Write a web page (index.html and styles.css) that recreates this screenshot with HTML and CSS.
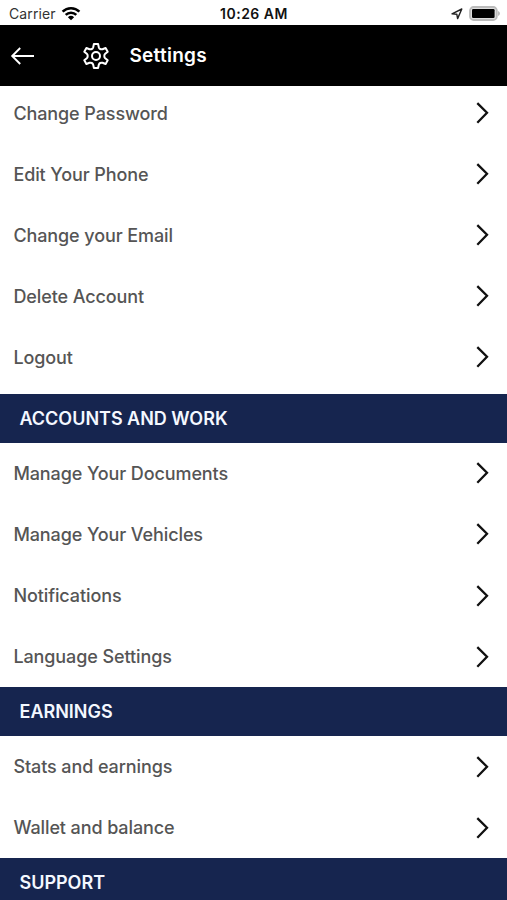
FILE: index.html
```html
<!DOCTYPE html>
<html lang="en">
<head>
<meta charset="utf-8">
<title>Settings</title>
<link rel="stylesheet" href="styles.css">
</head>
<body>
<svg class="defs" aria-hidden="true"><symbol id="chevron" viewBox="0 0 14 24"><path d="M2.3 2.1 12 11.8 2.3 21.7" fill="none" stroke="#111" stroke-width="2.3"/></symbol></svg>
<div class="status">
  <div class="carrier"><span>Carrier</span>
    <svg width="20" height="15" viewBox="0 0 20 15"><g fill="none" stroke="#000" stroke-width="2.5"><path d="M1.6 5.6a12 12 0 0 1 16.8 0"/><path d="M4.7 8.9a7.6 7.6 0 0 1 10.6 0"/></g><path d="M6.9 11.2a4.5 4.5 0 0 1 6.2 0L10 14.3z"/></svg>
  </div>
  <div class="time">10:26 AM</div>
  <div class="indicators">
    <svg width="12" height="12" viewBox="0 0 12 12"><path d="M1 5.9 10.8 1 6.6 10.6 5.8 6.2z" fill="none" stroke="#222" stroke-width="1.4" stroke-linejoin="round"/></svg>
    <svg width="31" height="15" viewBox="0 0 31 15"><rect x="1" y="1" width="26.8" height="13" rx="3.6" fill="#ddd" stroke="#bbb" stroke-width="1.8"/><rect x="3" y="3" width="22.6" height="9" rx="1.2"/><path d="M29 5q2 .8 2 2.5T29 10z" fill="#bbb"/></svg>
  </div>
</div>
<header class="bar">
  <svg class="back" width="24" height="20" viewBox="0 0 24 20"><path d="M10.2 2 2.2 10l8 8M2.2 10H24" fill="none" stroke="#fff" stroke-width="1.9"/></svg>
  <svg class="gear" width="26" height="28" viewBox="0 0 26 28"><g fill="none" stroke="#fff" stroke-width="2" stroke-linejoin="round"><path d="M10.9 2h4.2l.7 3.2q.3 1.2 1.4 1.8t2.3.2l3.1-1.2 2.1 3.7-2.5 2.1q-.9.8-.9 2.2t.9 2.2l2.5 2.1-2.1 3.7-3.1-1.2q-1.2-.4-2.3.2t-1.4 1.8l-.7 3.2h-4.2l-.7-3.2q-.3-1.2-1.4-1.8t-2.3-.2l-3.1 1.2-2.1-3.7 2.5-2.1q.9-.8.9-2.2t-.9-2.2L1.3 9.7 3.4 6l3.1 1.2q1.2.4 2.3-.2t1.4-1.8z"/><circle cx="13" cy="14" r="4"/></g></svg>
  <h1>Settings</h1>
</header>
<main>
  <ul class="first">
    <li><span>Change Password</span><svg><use href="#chevron"/></svg></li>
    <li><span>Edit Your Phone</span><svg><use href="#chevron"/></svg></li>
    <li><span>Change your Email</span><svg><use href="#chevron"/></svg></li>
    <li><span>Delete Account</span><svg><use href="#chevron"/></svg></li>
    <li><span>Logout</span><svg><use href="#chevron"/></svg></li>
  </ul>
  <h2>ACCOUNTS AND WORK</h2>
  <ul>
    <li><span>Manage Your Documents</span><svg><use href="#chevron"/></svg></li>
    <li><span>Manage Your Vehicles</span><svg><use href="#chevron"/></svg></li>
    <li><span>Notifications</span><svg><use href="#chevron"/></svg></li>
    <li><span>Language Settings</span><svg><use href="#chevron"/></svg></li>
  </ul>
  <h2>EARNINGS</h2>
  <ul>
    <li><span>Stats and earnings</span><svg><use href="#chevron"/></svg></li>
    <li><span>Wallet and balance</span><svg><use href="#chevron"/></svg></li>
  </ul>
  <h2>SUPPORT</h2>
</main>
</body>
</html>
```
FILE: styles.css
```css
* { box-sizing: border-box; }
body { margin: 0; height: 900px; overflow: hidden; display: flex; flex-direction: column; background: #fff; font-family: Inter, "Liberation Sans", sans-serif; color: #555; }
.defs { position: absolute; width: 0; height: 0; }
.status { flex: none; height: 25.4px; padding: 2px 7px 0 9px; display: grid; grid-template-columns: 1fr auto 1fr; align-items: center; color: #111; font-size: 14px; line-height: 20px; }
.carrier { display: flex; align-items: center; gap: 5px; color: #333; letter-spacing: .1px; }
.time { font-weight: 600; letter-spacing: .5px; margin-right: 1px; }
.indicators { display: flex; justify-content: flex-end; align-items: center; gap: 6px; }
.bar { flex: none; height: 60.8px; background: #000; color: #fff; display: flex; align-items: center; padding-left: 10px; }
.gear { margin-left: 49px; }
h1 { margin: 1px 0 0 20.5px; font-size: 19px; font-weight: 600; line-height: 24px; letter-spacing: .25px; }
main { flex: none; height: 813.8px; overflow: hidden; display: flex; flex-direction: column; }
ul { flex: none; list-style: none; margin: 0; padding: 0; }
.first { margin-top: -3.5px; padding-bottom: 6.1px; }
li { height: 61.05px; padding: 0 18px 0 13.4px; display: flex; align-items: center; justify-content: space-between; font-size: 18px; font-weight: 500; letter-spacing: -.1px; }
li svg { width: 14px; height: 24px; }
h2 { flex: none; margin: 0; height: 48.9px; padding-left: 19.5px; display: flex; align-items: center; background: #16254f; color: #f4f8ff; font-size: 18px; font-weight: 600; letter-spacing: -.02px; }
```
